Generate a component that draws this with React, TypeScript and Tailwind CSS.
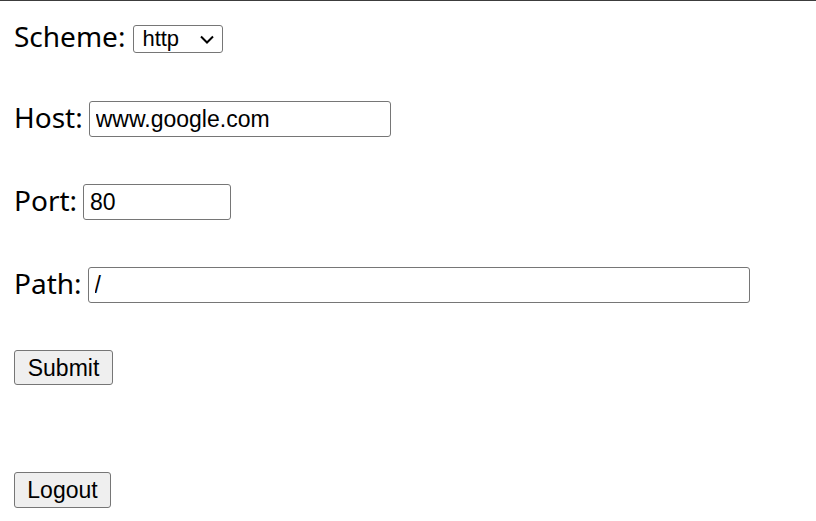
export default function App() {
  const label = "text-[28px] text-black leading-none mr-[6px] mb-[4px]";
  const field =
    "h-[36px] border border-[#767676] rounded-[3px] bg-white px-[6px] text-[23px] text-black outline-none font-['Liberation_Sans',sans-serif]";
  const button =
    "border border-[#767676] rounded-[3px] bg-[#efefef] text-[23px] text-black font-['Liberation_Sans',sans-serif]";
  return (
    <div className="min-h-[521px] bg-white border-t border-[#3c3c3c] font-['Noto_Sans',sans-serif]">
      <form className="flex flex-col items-start px-[14px] pt-[18px]" onSubmit={(e) => e.preventDefault()}>
        <div className="flex h-[36px] items-center">
          <span className="text-[28px] text-black leading-none mr-[8px] mb-[3px]">Scheme:</span>
          <div className="relative flex h-[28px] mt-[3px]">
            <select
              defaultValue="http"
              className="box-border h-[28px] w-[90px] appearance-none border border-[#767676] rounded-[3px] bg-white pl-[8px] py-0 text-[22px] leading-[26px] text-black font-['Liberation_Sans',sans-serif] outline-none"
            >
              <option value="http">http</option>
              <option value="https">https</option>
            </select>
            <svg
              className="pointer-events-none absolute right-[9px] top-[10px]"
              width="14"
              height="9"
              viewBox="0 0 14 9"
              fill="none"
              stroke="black"
              strokeWidth="2"
            >
              <path d="M1 1.5 L7 7.5 L13 1.5" />
            </svg>
          </div>
        </div>

        {/* host / port / path */}
        <div className="mt-[46px] flex h-[36px] items-center">
          <span className={label}>Host:</span>
          <input defaultValue="www.google.com" className={`${field} w-[302px]`} />
        </div>

        <div className="mt-[47px] flex h-[36px] items-center">
          <span className={label}>Port:</span>
          <input defaultValue="80" className={`${field} w-[148px]`} />
        </div>

        <div className="mt-[47px] flex h-[36px] items-center">
          <span className={label}>Path:</span>
          <input defaultValue="/" className={`${field} w-[662px]`} />
        </div>

        <button type="submit" className={`${button} mt-[47px] h-[35px] w-[99px]`}>
          Submit
        </button>

        <button type="button" className={`${button} mt-[87px] h-[36px] w-[97px]`}>
          Logout
        </button>
      </form>
    </div>
  );
}
